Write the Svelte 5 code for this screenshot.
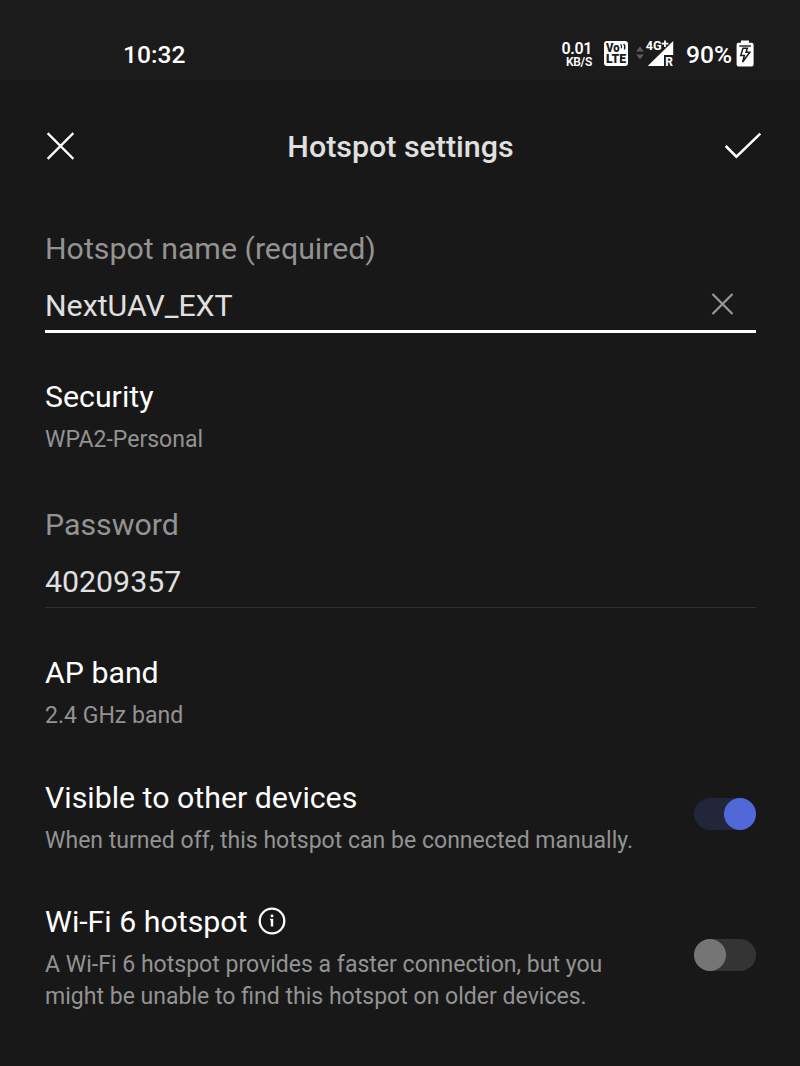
<script>
  let visible = $state(true);
  let wifi6 = $state(false);
</script>

<div class="screen">
  <header class="status">
    <span class="time">10:32</span>
    <div class="indicators">
      <div class="speed"><span class="rate">0.01</span><span class="unit">KB/S</span></div>
      <svg class="volte" width="24" height="25" viewBox="0 0 24 25">
        <rect width="24" height="25" rx="3" fill="#fff" />
        <text x="2" y="11.2" font-size="12.5" textLength="13.5" lengthAdjust="spacingAndGlyphs">Vo</text>
        <path d="M16.6 3.2Q18.2 4.8 17.3 7.4M19.6 2.8Q21.8 5 20.4 8.4" fill="none" stroke="#1b1b1b" stroke-width="1.2" />
        <text x="2" y="22" font-size="12.8" textLength="20" lengthAdjust="spacingAndGlyphs">LTE</text>
      </svg>
      <svg class="arrows" width="8" height="14" viewBox="0 0 8 14">
        <path d="M0 5.4L4 .6 8 5.4zM0 8.4L4 13.2 8 8.4z" fill="#5c5c5c" />
      </svg>
      <svg class="signal" width="29" height="29" viewBox="0 0 29 29">
        <path d="M28.2 2V16H19V27H2.7z" fill="#fff" />
        <text x="0.8" y="11" font-size="12" textLength="16" lengthAdjust="spacingAndGlyphs" class="net">4G</text>
        <path d="M20 1.4V8M16.7 4.7H23.3" stroke="#1b1b1b" stroke-width="3.2" />
        <path d="M20 1.4V8M16.7 4.7H23.3" stroke="#fff" stroke-width="1.8" />
        <text x="20.2" y="27" font-size="12" class="net">R</text>
      </svg>
      <span class="percent">90%</span>
      <svg class="battery" width="18" height="27" viewBox="0 0 18 27">
        <path d="M5 0.6h8v2.2h2.6a2 2 0 0 1 2 2V24.4a2 2 0 0 1-2 2H2.6a2 2 0 0 1-2-2V4.8a2 2 0 0 1 2-2H5z" fill="#fff" />
        <path d="M3.3 6H15" stroke="#1b1b1b" stroke-width="1.4" />
        <path d="M7 8.3H11.4L10 12.2H13.8L6.6 22L8.4 15.4H4.8z" fill="none" stroke="#1b1b1b" stroke-width="1.5" />
      </svg>
    </div>
  </header>

  <nav class="bar">
    <button class="icon" aria-label="Close">
      <svg width="28" height="28" viewBox="0 0 28 28"><path d="M2.5 2L26.5 26M26.5 2L2.5 26" fill="none" stroke="#fff" stroke-width="2.4" stroke-linecap="square" /></svg>
    </button>
    <h1>Hotspot settings</h1>
    <button class="icon" aria-label="Save">
      <svg width="38" height="28" viewBox="0 0 38 28"><path d="M1.7 14L12.4 24.7L36.3 1.7" fill="none" stroke="#fff" stroke-width="2.5" /></svg>
    </button>
  </nav>

  <main>
    <section class="field">
      <div class="label">Hotspot name (required)</div>
      <div class="value focused">
        <span>NextUAV_EXT</span>
        <svg width="24" height="24" viewBox="0 0 24 24"><path d="M2.5 2L22.5 22M22.5 2L2.5 22" fill="none" stroke="#999" stroke-width="2.2" /></svg>
      </div>
    </section>

    <section class="item security">
      <div class="title">Security</div>
      <div class="sub">WPA2-Personal</div>
    </section>

    <section class="field password">
      <div class="label">Password</div>
      <div class="value"><span>40209357</span></div>
    </section>

    <section class="item band">
      <div class="title">AP band</div>
      <div class="sub">2.4 GHz band</div>
    </section>

    <section class="item row visible">
      <div>
        <div class="title">Visible to other devices</div>
        <div class="sub">When turned off, this hotspot can be connected manually.</div>
      </div>
      <button class="switch" class:on={visible} role="switch" aria-checked={visible} aria-label="Visible to other devices" onclick={() => (visible = !visible)}></button>
    </section>

    <section class="item row wifi">
      <div>
        <div class="title">
          Wi-Fi 6 hotspot
          <svg width="28" height="28" viewBox="0 0 28 28">
            <circle cx="14" cy="14" r="12.3" fill="none" stroke="#fff" stroke-width="2.3" />
            <rect x="12.7" y="7.6" width="2.6" height="2.5" fill="#fff" />
            <path d="M12 11.8h3.2v7.8h-2.4v-6.3h-.8z" fill="#fff" />
          </svg>
        </div>
        <div class="sub">A Wi-Fi 6 hotspot provides a faster connection, but you<br />might be unable to find this hotspot on older devices.</div>
      </div>
      <button class="switch" class:on={wifi6} role="switch" aria-checked={wifi6} aria-label="Wi-Fi 6 hotspot" onclick={() => (wifi6 = !wifi6)}></button>
    </section>
  </main>
</div>

<style>
  :global(body) { margin: 0; background: #181818; }
  .screen {
    width: 800px;
    height: 1066px;
    overflow: hidden;
    background: #181818;
    color: #fff;
    font-family: Roboto, "Liberation Sans", sans-serif;
  }
  svg { display: block; flex: none; }
  button { padding: 0; border: 0; background: none; }
  .status {
    display: flex;
    justify-content: space-between;
    height: 80px;
    box-sizing: border-box;
    padding: 38px 46px 0 123px;
    background: #1b1b1b;
  }
  .time { margin-top: 1px; font-size: 24.6px; line-height: 32px; font-weight: 500; }
  .indicators { display: flex; align-items: flex-start; }
  .speed {
    display: flex;
    flex-direction: column;
    align-items: flex-end;
    width: 30px;
    margin: 3px 12px 0 0;
    font-weight: 600;
    white-space: nowrap;
  }
  .rate { font-size: 16px; line-height: 15px; letter-spacing: -0.4px; }
  .unit { font-size: 12px; line-height: 12px; letter-spacing: -0.3px; }
  .volte { margin: 3px 8px 0 0; }
  .volte text { font-family: Roboto, sans-serif; font-weight: 900; fill: #1b1b1b; }
  .arrows { margin: 8px 1px 0 0; }
  .signal { margin: 1px 12px 0 0; }
  .net { font-family: Roboto, sans-serif; font-weight: 700; fill: #fff; }
  .percent { margin: 1px 4px 0 0; font-size: 24.6px; line-height: 32px; font-weight: 500; }
  .battery { margin-top: 2px; }
  .bar {
    display: flex;
    align-items: center;
    justify-content: space-between;
    height: 132px;
    padding: 0 38px 0 46px;
  }
  h1 {
    margin: 2px 0 0 3px;
    font-size: 30.4px;
    line-height: 36px;
    font-weight: 500;
    color: #e0e0e0;
  }
  main { padding: 19px 44px 0 45px; }
  .label { font-size: 30.3px; line-height: 36px; color: #939393; }
  .value {
    display: flex;
    justify-content: space-between;
    align-items: flex-start;
    height: 43px;
    margin-top: 21px;
    border-bottom: 1px solid #303030;
    font-size: 30.3px;
    line-height: 35px;
    color: #e0e0e0;
  }
  .value.focused { height: 42px; border-bottom: 3px solid #fff; }
  .value svg { margin: 4px 22px 0 0; }
  .title { display: flex; align-items: center; font-size: 30.3px; line-height: 36px; }
  .title svg { margin: -3px 0 0 10px; }
  .sub { margin-top: 9px; margin-bottom: -1px; font-size: 23.05px; line-height: 32px; color: #939393; white-space: nowrap; }
  .security { margin-top: 46px; }
  .password { margin-top: 52px; }
  .band { margin-top: 47px; }
  .row { display: flex; justify-content: space-between; align-items: center; }
  .visible { margin-top: 49px; }
  .wifi { margin-top: 48px; }
  .row > div { display: flow-root; margin-bottom: -1px; }
  .row .sub { margin-bottom: 0; }
  .switch {
    display: flex;
    width: 62px;
    height: 32px;
    border-radius: 16px;
    background: #343434;
    margin-top: -8px;
  }
  .wifi .switch { margin-top: -6px; }
  .switch::before { content: ""; width: 32px; height: 32px; border-radius: 50%; background: #757575; }
  .switch.on { justify-content: flex-end; background: #22263a; }
  .switch.on::before { background: #5168d8; }
</style>
